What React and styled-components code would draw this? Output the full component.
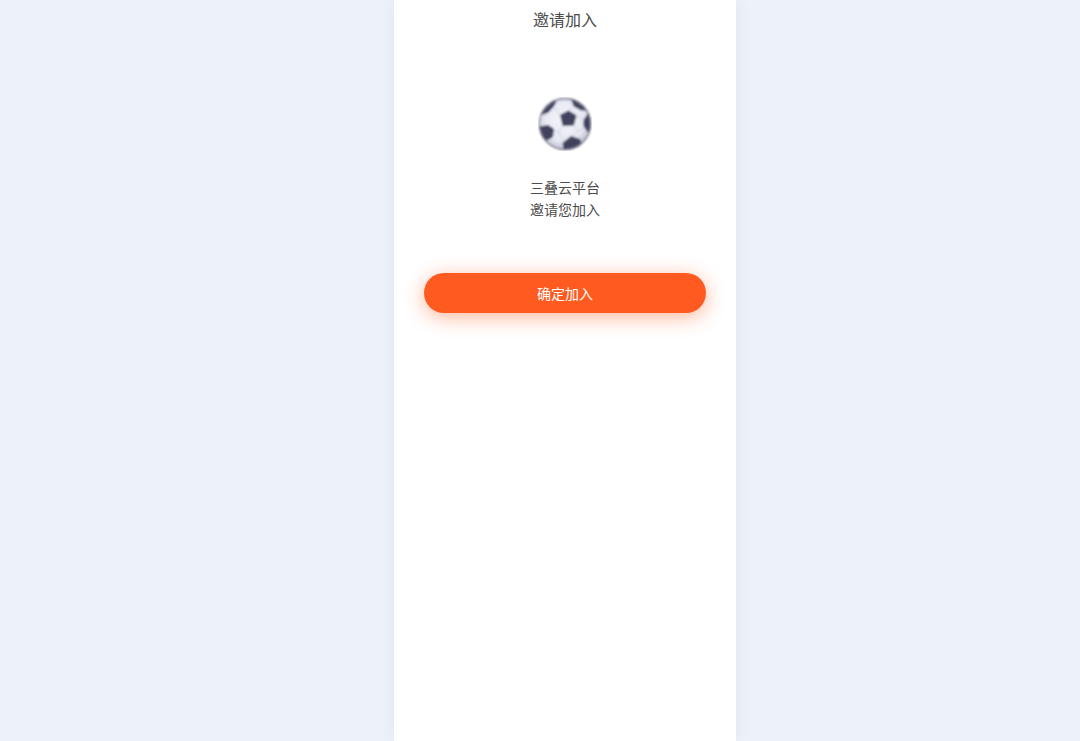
import React from 'react';
import styled, { createGlobalStyle } from 'styled-components'

const GlobalStyle = createGlobalStyle`
    body {
        margin: 0;
        background: #ecf1fa;
        color: #4c4c4c;
        font-family: 'Noto Sans CJK SC', sans-serif;
    }
`

const Page = styled.div`
    display: flex;
    justify-content: center;
    min-height: 100vh;
    box-sizing: border-box;
    padding-left: 50px;
`

const Panel = styled.main`
    display: flex;
    flex-direction: column;
    flex: 0 1 342px;
    background: #fff;
    box-shadow: 0 0 16px rgba(0, 0, 0, 0.06);
`

const Title = styled.h1`
    margin: 0;
    font-size: 16px;
    font-weight: 400;
    line-height: 38px;
    text-align: center;
`

const Invite = styled.section`
    display: flex;
    flex-direction: column;
    align-items: center;
    padding: 59px 30px 0;
`

const Logo = styled.svg`
    width: 54px;
    height: 54px;
    margin-bottom: 25px;
`

const Text = styled.p`
    margin: 0;
    font-size: 14px;
    line-height: 22px;
`

const JoinButton = styled.button`
    width: 100%;
    height: 40px;
    margin-top: 53px;
    padding: 0;
    border: 0;
    border-radius: 20px;
    background: #ff5b20;
    box-shadow: 0 4px 20px rgba(255, 91, 32, 0.45);
    color: #fff;
    font-family: inherit;
    font-size: 14px;
    cursor: pointer;
`

function Football () {

    return(
        <Logo viewBox="0 0 54 54" role="img" aria-label="logo">
            <defs>
                <radialGradient id="ball" cx="46%" cy="42%" r="58%">
                    <stop offset="0" stopColor="#f3f4fa" />
                    <stop offset="0.7" stopColor="#e7e9f3" />
                    <stop offset="1" stopColor="#bdbdce" />
                </radialGradient>
                <clipPath id="edge">
                    <circle cx="27" cy="27" r="26" />
                </clipPath>
                <filter id="soft">
                    <feGaussianBlur stdDeviation="0.8" />
                </filter>
            </defs>
            <g filter="url(#soft)">
                <circle cx="27" cy="27" r="26" fill="url(#ball)" />
                <g clipPath="url(#edge)">
                    <g stroke="#cfd1df" strokeWidth="1" fill="none">
                        <path d="M22 18L16 10M31 14L36 9M38 19L46 22M35 28L40 34L35 40M25 28L21 35L15 33M21 35L26 45M40 34L47 30M17 5L26 3L34 4M10 15L5 22L6 30" />
                    </g>
                    <g fill="#42435f" stroke="#42435f" strokeWidth="1" strokeLinejoin="round">
                        <path d="M22.5 18L30.5 14L38 18.5L35.5 28L25 28.5Z" />
                        <path d="M1 18L8 5L15 3L18 5L15 10L10.5 15L4 17.5Z" />
                        <path d="M33 1L44 5L48 13L43 13L36 9Z" />
                        <path d="M50 17L55 26L50 35L46 29L46 23Z" />
                        <path d="M1 30L10 28.5L15.5 32L14.5 40L9 43L3 40Z" />
                        <path d="M25 46L33 39.5L42 42.5L43 48L35 53L26 52Z" />
                    </g>
                </g>
                <circle cx="27" cy="27" r="25.5" fill="none" stroke="#77768b" strokeWidth="1.4" />
            </g>
        </Logo>
    )
}

function App () {

    return(
        <>
            <GlobalStyle />
            <Page>
                <Panel>
                    <Title>邀请加入</Title>
                    <Invite>
                        <Football />
                        <Text>三叠云平台</Text>
                        <Text>邀请您加入</Text>
                        <JoinButton type="button">确定加入</JoinButton>
                    </Invite>
                </Panel>
            </Page>
        </>
    )
}

export default App;
